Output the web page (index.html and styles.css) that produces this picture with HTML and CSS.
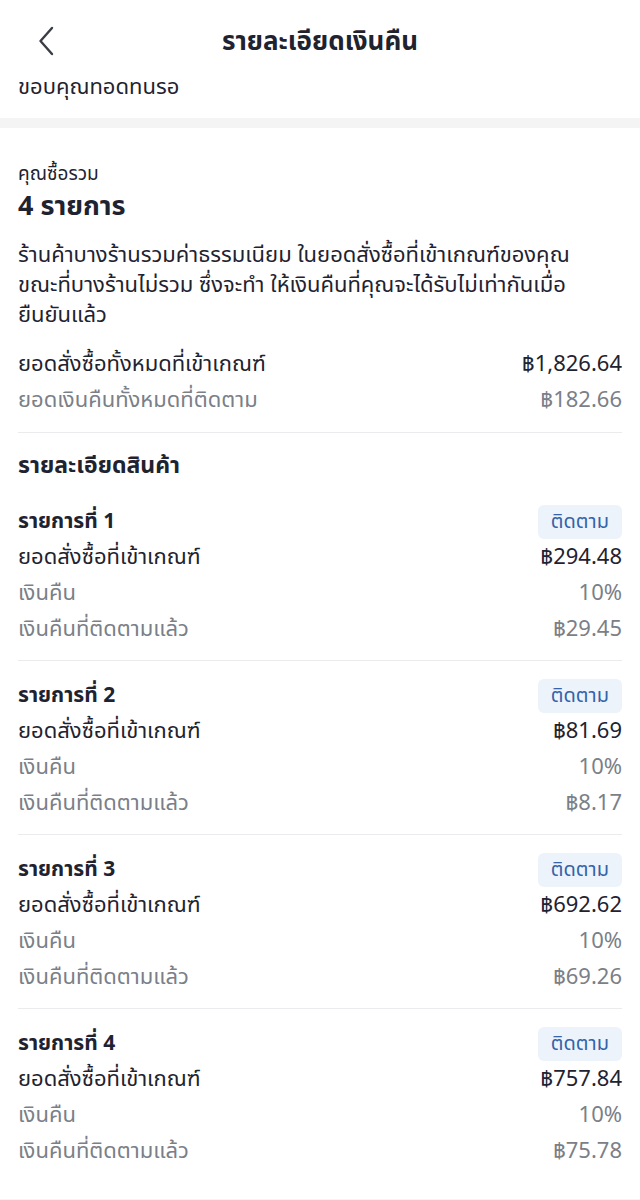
FILE: index.html
```html
<html>

<head>
    <title>รายละเอียดเงินคืน</title>
    <link rel="stylesheet" href="styles.css">
</head>

<body>
    <div class="header">
        <div class="back">
            <svg width="20" height="30" viewBox="0 0 20 30"><path d="M15 2 L3.5 15 L15 28" fill="none" stroke="#3a3d45" stroke-width="2.4" stroke-linecap="round" stroke-linejoin="round"/></svg>
        </div>
        <div class="title">รายละเอียดเงินคืน</div>
    </div>
    <div class="subtitle">ขอบคุณทอดทนรอ</div>
    <div class="band"></div>

    <div class="content">
        <div class="small">คุณซื้อรวม</div>
        <div class="count">4 รายการ</div>
        <p class="note">ร้านค้าบางร้านรวมค่าธรรมเนียม ในยอดสั่งซื้อที่เข้าเกณฑ์ของคุณ<br>ขณะที่บางร้านไม่รวม ซึ่งจะทำ ให้เงินคืนที่คุณจะได้รับไม่เท่ากันเมื่อ<br>ยืนยันแล้ว</p>
        <div class="row"><span>ยอดสั่งซื้อทั้งหมดที่เข้าเกณฑ์</span><span>฿1,826.64</span></div>
        <div class="row grey"><span>ยอดเงินคืนทั้งหมดที่ติดตาม</span><span>฿182.66</span></div>

        <div class="section">
            <div class="heading">รายละเอียดสินค้า</div>

            <div class="item">
                <div class="itemtitle"><span>รายการที่ 1</span><span class="badge">ติดตาม</span></div>
                <div class="row"><span>ยอดสั่งซื้อที่เข้าเกณฑ์</span><span>฿294.48</span></div>
                <div class="row grey"><span>เงินคืน</span><span>10%</span></div>
                <div class="row grey"><span>เงินคืนที่ติดตามแล้ว</span><span>฿29.45</span></div>
            </div>

            <div class="item">
                <div class="itemtitle"><span>รายการที่ 2</span><span class="badge">ติดตาม</span></div>
                <div class="row"><span>ยอดสั่งซื้อที่เข้าเกณฑ์</span><span>฿81.69</span></div>
                <div class="row grey"><span>เงินคืน</span><span>10%</span></div>
                <div class="row grey"><span>เงินคืนที่ติดตามแล้ว</span><span>฿8.17</span></div>
            </div>

            <div class="item">
                <div class="itemtitle"><span>รายการที่ 3</span><span class="badge">ติดตาม</span></div>
                <div class="row"><span>ยอดสั่งซื้อที่เข้าเกณฑ์</span><span>฿692.62</span></div>
                <div class="row grey"><span>เงินคืน</span><span>10%</span></div>
                <div class="row grey"><span>เงินคืนที่ติดตามแล้ว</span><span>฿69.26</span></div>
            </div>

            <div class="item">
                <div class="itemtitle"><span>รายการที่ 4</span><span class="badge">ติดตาม</span></div>
                <div class="row"><span>ยอดสั่งซื้อที่เข้าเกณฑ์</span><span>฿757.84</span></div>
                <div class="row grey"><span>เงินคืน</span><span>10%</span></div>
                <div class="row grey"><span>เงินคืนที่ติดตามแล้ว</span><span>฿75.78</span></div>
            </div>
        </div>
    </div>
    <div class="band"></div>
</body>

</html>
```

FILE: styles.css
```css
body {
    margin: 0;
    font-family: "Noto Sans Thai", "Noto Sans", "DejaVu Sans", sans-serif;
    color: #1f2330;
    background-color: #ffffff;
}

.header {
    height: 84px;
    display: flex;
    align-items: center;
    justify-content: center;
    position: relative;
}

.back {
    position: absolute;
    left: 37px;
    top: 26px;
}

.title {
    font-size: 26px;
    font-weight: bold;
}

.subtitle {
    font-size: 22px;
    line-height: 36px;
    padding: 0 18px 12px 18px;
    margin-top: -14px;
}

.band {
    height: 10px;
    background-color: #f4f4f5;
}

.content {
    padding: 33px 18px 17px 18px;
}

.small {
    font-size: 19px;
    line-height: 28px;
}

.count {
    font-size: 27px;
    font-weight: bold;
    line-height: 36px;
}

.note {
    font-size: 22px;
    line-height: 30px;
    margin: 16px 0 16px 0;
}

.row {
    display: flex;
    justify-content: space-between;
    font-size: 22px;
    line-height: 36px;
}

.grey {
    color: #7b7f88;
}

.section {
    border-top: 1px solid #ebebed;
    margin-top: 13px;
    padding-top: 16px;
}

.heading {
    font-size: 23px;
    font-weight: bold;
    line-height: 34px;
    margin-bottom: 4px;
}

.item {
    padding: 16px 0 12px 0;
    border-bottom: 1px solid #ebebed;
}

.item:last-child {
    border-bottom: none;
}

.itemtitle {
    display: flex;
    justify-content: space-between;
    align-items: center;
    font-size: 21px;
    font-weight: bold;
    height: 37px;
}

.badge {
    font-size: 20px;
    font-weight: normal;
    line-height: 26px;
    color: #3463a9;
    background-color: #edf3fb;
    border-radius: 6px;
    padding: 4px 13px;
}
```
